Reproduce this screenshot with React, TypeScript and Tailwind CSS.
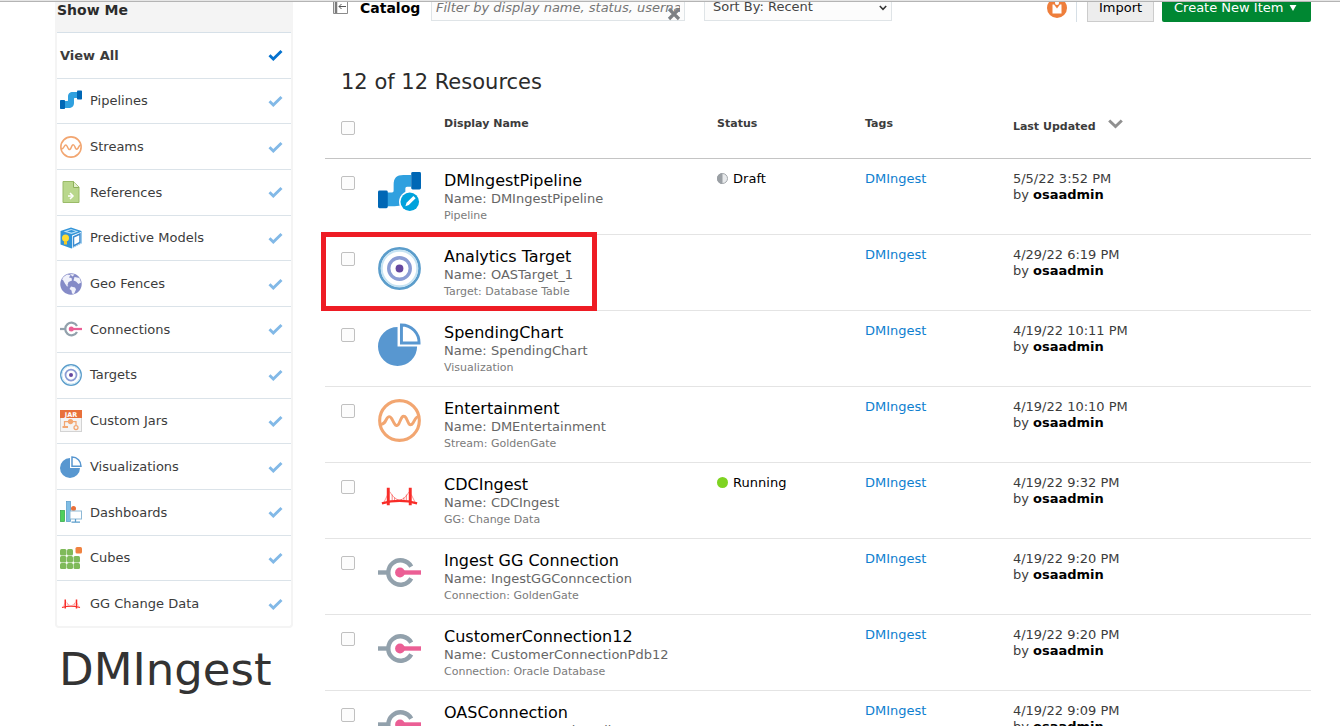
import React from "react";

type IconName =
  | "pipeline" | "pipelineEdit" | "stream" | "reference" | "model" | "geo" | "connection"
  | "target" | "jar" | "chart" | "dashboard" | "cube" | "bridge";

function Icon({ name, className }: { name: IconName; className: string }) {
  return (
    <svg viewBox="0 0 44 44" className={className} aria-hidden="true">
      {shapes[name]}
    </svg>
  );
}

const pipe = (
  <>
    <path d="M9 22h5c2 0 2-1 2-3v-5C16 7 19 4 26 4h8v12h-4c-2 0-2 1-2 3v6c0 8-4 11-11 11H9z" fill="#2fa0df" />
    <rect x="0" y="20" width="10" height="18" rx="1.5" fill="#0067b5" />
    <rect x="34" y="1" width="10" height="18" rx="1.5" fill="#0067b5" />
  </>
);

const shapes: Record<IconName, React.ReactNode> = {
  pipeline: pipe,
  pipelineEdit: (
    <>
      {pipe}
      <circle cx="32.500" cy="31.500" r="11" fill="#fff" />
      <circle cx="32.500" cy="31.500" r="9.500" fill="#00a2dc" />
      <path d="M28 36l1.200-3.500 7-7 2.300 2.300-7 7z" fill="#fff" />
    </>
  ),
  stream: (
    <g fill="none" stroke="#f2a671">
      <circle cx="22" cy="22" r="20.300" strokeWidth="3.200" />
      <path d="M3 26c3 0 4-2 5.500-5 2-4 4-4 6 0s4 9 7 4c2-4 3-9 6-7s3 10 7 8c3-2 3-8 7-8" strokeWidth="3" />
    </g>
  ),
  reference: (
    <g>
      <path d="M6 1h21l11 11v31H6z" fill="#b9d78c" stroke="#9abb68" strokeWidth="2" />
      <path d="M27 1v12h11" fill="#e4efcf" stroke="#8db05a" strokeWidth="2" />
      <path d="M16 30h7M20 24l6 6-6 6" fill="none" stroke="#fff" strokeWidth="3" />
    </g>
  ),
  model: (
    <g>
      <path d="M1 8L22 1l21 7v25l-20 10L1 35z" fill="#3294d8" />
      <path d="M7 9l15-5 15 5-14 5z" fill="#b8def5" />
      <path d="M14 9l9-3 8 3-8 2z" fill="#3294d8" />
      <path d="M24 17l18-7v23l-18 9z" fill="#fff" />
      <path d="M27 20l13-6v17l-13 7z" fill="#fff" stroke="#3a8bd0" strokeWidth="3" />
      <circle cx="11" cy="22" r="7" fill="#ffdc32" />
      <path d="M8 28h6v7H8z" fill="#f5c927" />
    </g>
  ),
  geo: (
    <g>
      <circle cx="22" cy="22" r="21.500" fill="#858bc7" />
      <path d="M7 8l7-5 7 1-3 5 5 1 1 5-7 3-2 6-4-1-5-9-2-1zM20 2l9 1-4 4zM29 8l10 2 3 9-5 3-5-5-5-2zM22 27l8 2 2 4-4 9-4-1-1-6-4-3zM10 21l7 5-3 1z" fill="#f1f2fb" />
    </g>
  ),
  connection: (
    <g fill="none">
      <path d="M0 22h11" stroke="#92a1ac" strokeWidth="4.500" />
      <path d="M34 16A12.500 12.500 0 1 0 34 28" stroke="#92a1ac" strokeWidth="4.500" />
      <path d="M22 22h22" stroke="#eb5f95" strokeWidth="4.500" />
      <circle cx="22.500" cy="22" r="5" fill="#eb5f95" />
    </g>
  ),
  target: (
    <g fill="none">
      <circle cx="22" cy="22" r="20.500" stroke="#5b9dcb" strokeWidth="2.800" />
      <circle cx="22" cy="22" r="18.200" stroke="#c6e3f3" strokeWidth="2" />
      <circle cx="22" cy="22" r="11" stroke="#8a9cd4" strokeWidth="3.500" />
      <circle cx="22" cy="22" r="4" fill="#6648a0" />
    </g>
  ),
  jar: (
    <g>
      <rect x="1" y="1" width="42" height="42" fill="#f4f4f4" stroke="#d3d3d3" strokeWidth="2" />
      <rect width="44" height="16" fill="#e8703a" />
      <text x="22" y="13" textAnchor="middle" fontSize="13" fontWeight="bold" fontFamily="DejaVu Sans" fill="#fff">JAR</text>
      <g fill="none" stroke="#f2a671" strokeWidth="2.500">
        <path d="M9 32v-9h23v7" />
        <circle cx="21" cy="23" r="4" fill="#f2a671" />
        <circle cx="32" cy="35" r="4" />
        <path d="M5 34h11" strokeWidth="4" />
      </g>
    </g>
  ),
  chart: (
    <g>
      <path d="M20 4v20h20a20 20 0 1 1-20-20z" fill="#5897d0" />
      <path d="M24 2a18 18 0 0 1 18 18.500H24z" fill="#fff" stroke="#5897d0" strokeWidth="3" />
    </g>
  ),
  dashboard: (
    <g>
      <rect x="1" y="19" width="8" height="22" fill="#4fd05c" stroke="#35a849" strokeWidth="1.500" />
      <rect x="13" y="1" width="8" height="40" fill="#7fbde5" stroke="#5b9dcb" strokeWidth="1.500" />
      <circle cx="27" cy="15" r="5" fill="#e8703a" />
      <rect x="20" y="20" width="23" height="16" fill="#fff" stroke="#8fb9d6" strokeWidth="2" />
      <path d="M31 36v5M23 42h17" stroke="#5b9dcb" strokeWidth="2.500" />
    </g>
  ),
  cube: (
    <g fill="#7fba5a">
      <rect x="0" y="4" width="13" height="13" rx="3" />
      <rect x="14" y="4" width="12" height="13" rx="3" />
      <rect x="0" y="18" width="13" height="13" rx="3" />
      <rect x="14" y="18" width="12" height="13" rx="3" />
      <rect x="27" y="18" width="13" height="13" rx="3" />
      <rect x="0" y="32" width="13" height="12" rx="3" />
      <rect x="14" y="32" width="12" height="12" rx="3" />
      <rect x="27" y="32" width="13" height="12" rx="3" />
      <rect x="31" y="0" width="13" height="13" rx="3" fill="#f08240" />
    </g>
  ),
  bridge: (
    <g fill="none" stroke="#f82c28">
      <path d="M10.500 13v18M33 13v18" strokeWidth="3" />
      <path d="M4 29q18-5 36 0" strokeWidth="2.300" />
      <path d="M12 17q10 17 20 0M10 20l-4 8M34 20l4 8" strokeWidth="1" opacity=".5" />
      <path d="M14.500 20v6M17 23v3M19.500 25v2M24 25v2M26.500 23v3M29 20v6" strokeWidth="1" opacity=".6" />
    </g>
  ),
};

function Check({ className }: { className: string }) {
  return (
    <svg viewBox="0 0 15 12" className={className} aria-hidden="true">
      <path d="M1.500 6.300L5.300 10 13.500 2" fill="none" stroke="currentColor" strokeWidth="2.900" />
    </svg>
  );
}

const filters: { label: string; icon: IconName }[] = [
  { label: "Pipelines", icon: "pipeline" },
  { label: "Streams", icon: "stream" },
  { label: "References", icon: "reference" },
  { label: "Predictive Models", icon: "model" },
  { label: "Geo Fences", icon: "geo" },
  { label: "Connections", icon: "connection" },
  { label: "Targets", icon: "target" },
  { label: "Custom Jars", icon: "jar" },
  { label: "Visualizations", icon: "chart" },
  { label: "Dashboards", icon: "dashboard" },
  { label: "Cubes", icon: "cube" },
  { label: "GG Change Data", icon: "bridge" },
];

type Resource = {
  title: string;
  name: string;
  kind: string;
  icon: IconName;
  date: string;
  status?: "Draft" | "Running";
  marked?: boolean;
};

const resources: Resource[] = [
  { title: "DMIngestPipeline", name: "DMIngestPipeline", kind: "Pipeline", icon: "pipelineEdit", date: "5/5/22 3:52 PM", status: "Draft" },
  { title: "Analytics Target", name: "OASTarget_1", kind: "Target: Database Table", icon: "target", date: "4/29/22 6:19 PM", marked: true },
  { title: "SpendingChart", name: "SpendingChart", kind: "Visualization", icon: "chart", date: "4/19/22 10:11 PM" },
  { title: "Entertainment", name: "DMEntertainment", kind: "Stream: GoldenGate", icon: "stream", date: "4/19/22 10:10 PM" },
  { title: "CDCIngest", name: "CDCIngest", kind: "GG: Change Data", icon: "bridge", date: "4/19/22 9:32 PM", status: "Running" },
  { title: "Ingest GG Connection", name: "IngestGGConncection", kind: "Connection: GoldenGate", icon: "connection", date: "4/19/22 9:20 PM" },
  { title: "CustomerConnection12", name: "CustomerConnectionPdb12", kind: "Connection: Oracle Database", icon: "connection", date: "4/19/22 9:20 PM" },
  { title: "OASConnection", name: "OASConnectionPdb12", kind: "Connection: Oracle Database", icon: "connection", date: "4/19/22 9:09 PM" },
];

function Tick({ label }: { label: string }) {
  return (
    <input type="checkbox" aria-label={label} className="block size-[14px] appearance-none rounded-xs border border-[#c0c0c0] bg-[#fcfcfc] checked:bg-[#0572ce]" />
  );
}

function StatusMark({ status }: { status: "Draft" | "Running" }) {
  return (
    <span className="flex items-center gap-[5px] text-black">
      <svg viewBox="0 0 11 11" className="size-[11px]" aria-hidden="true">
        {status === "Draft" ? (
          <>
            <circle cx="5.500" cy="5.500" r="5" fill="#e8eaec" stroke="#a4a8ac" />
            <path d="M5.500 0a5.500 5.500 0 0 0 0 11z" fill="#9a9fa4" />
          </>
        ) : (
          <circle cx="5.500" cy="5.500" r="5.500" fill="#7ed321" />
        )}
      </svg>
      {status}
    </span>
  );
}

function Sidebar() {
  return (
    <aside className="w-[325px] shrink-0 pl-[55px]">
      <div className="mr-8 rounded-b-sm border-2 border-t-0 border-[#f4f4f4]">
        <h2 className="h-[30px] bg-[#f4f4f4] pt-px text-[14px] leading-[14px] font-bold text-[#2b2b2b]">Show Me</h2>
        <ul className="grid h-[594px] auto-rows-fr">
          <li className="border-t border-[#d6e0e8]">
            <button type="button" className="flex size-full items-center justify-between pr-2 pl-[3px] text-[13px] font-bold">
              View All
              <Check className="h-3 w-[15px] text-[#0572ce]" />
            </button>
          </li>
          {filters.map((f) => (
            <li key={f.label} className="border-t border-[#dbe3e9]">
              <button type="button" className="flex size-full items-center gap-2 pr-2 pl-[3px] text-[13px]">
                <Icon name={f.icon} className="size-[22px]" />
                <span className="grow text-left">{f.label}</span>
                <Check className="h-3 w-[15px] text-[#82b9e7]" />
              </button>
            </li>
          ))}
        </ul>
      </div>
      <h1 className="pt-4 pl-1 text-[45px] leading-[52px] text-[#333]">DMIngest</h1>
    </aside>
  );
}

function Toolbar() {
  return (
    <header className="flex h-5 items-end overflow-hidden text-[13px]">
      <button type="button" aria-label="Collapse panel" className="mb-2 ml-2">
        <svg viewBox="0 0 15 15" className="size-[15px]" fill="none" stroke="#8b8b8b" aria-hidden="true">
          <path d="M.5.500h14v14H.500z" />
          <path d="M3 1v13" stroke="#7b7b7b" strokeWidth="2.500" />
          <path d="M6 7.500h7M8.500 5L6 7.500 8.500 10" stroke="#555" />
        </svg>
      </button>
      <h2 className="ml-3 w-[71px] text-[14px] leading-[28px] font-bold text-black">Catalog</h2>
      <div className="relative mb-px flex w-[254px]">
        <input
          type="text"
          aria-label="Filter"
          placeholder="Filter by display name, status, username"
          className="h-7 w-full border border-[#dfe4e7] bg-[#fcfcfc] px-1 text-[13px] italic placeholder:text-[#757575]"
        />
        <button type="button" aria-label="Clear filter" className="absolute right-1 bottom-0">
          <svg viewBox="0 0 14 14" className="size-[14px]" aria-hidden="true">
            <path d="M2 2l10 10M12 2L2 12" stroke="#7d8084" strokeWidth="3.200" />
          </svg>
        </button>
      </div>
      <div className="relative mb-px ml-[19px] flex w-[188px]">
        <select aria-label="Sort order" className="h-7 w-full appearance-none border border-[#dfe4e7] bg-[#fcfcfc] px-2 text-[13px] text-[#444]">
          <option>Sort By: Recent</option>
        </select>
        <svg viewBox="0 0 8 6" className="pointer-events-none absolute right-[5px] bottom-[10px] h-[6px] w-2" aria-hidden="true">
          <path d="M.8 1L4 4.300 7.200 1" fill="none" stroke="#333" strokeWidth="1.500" />
        </svg>
      </div>
      <div className="ml-auto flex items-end">
        <button type="button" aria-label="User" className="mb-1 mr-[9px]">
          <svg viewBox="0 0 20 20" className="size-5" aria-hidden="true">
            <circle cx="10" cy="10" r="10" fill="#ee7e3b" />
            <path d="M5.500 6.500h1.500l3 4 3-4h1.500v9h-9z" fill="#fff" />
            <circle cx="10" cy="5" r="2" fill="#fff" />
          </svg>
        </button>
        <div className="mr-[10px] h-7 border-l border-[#d6dfe6]" />
        <button type="button" className="h-7 w-[67px] border border-[#ccc] bg-[#ededed] text-black">Import</button>
        <button type="button" className="ml-2 flex h-7 w-[149px] items-center gap-[6px] rounded-b-xs bg-[#008732] pl-3 text-white">
          Create New Item
          <svg viewBox="0 0 8 7" className="h-[6px] w-2 shrink-0" aria-hidden="true"><path d="M0 0h8L4 7z" fill="#fff" /></svg>
        </button>
      </div>
    </header>
  );
}

function Catalog() {
  return (
    <main className="min-w-0 grow pr-[29px]">
      <Toolbar />
      <h2 className="pt-[46px] pl-4 text-[21px] leading-[28px] text-[#2b2b2b]">12 of 12 Resources</h2>
      <table className="w-full table-fixed border-collapse text-left text-[13px] leading-4">
        <thead>
          <tr className="h-[62px] border-b border-[#c4c4c4] align-top text-[11px]">
            <th className="w-[53px] pt-[25px] pl-4"><Tick label="Select all" /></th>
            <th className="w-[66px]" aria-label="Type" />
            <th className="w-[27.7%] pt-5">Display Name</th>
            <th className="w-[15%] pt-5">Status</th>
            <th className="w-[15%] pt-5">Tags</th>
            <th className="pt-5">
              <button type="button" className="flex items-start gap-3">
                <span className="pt-[3px]">Last Updated</span>
                <svg viewBox="0 0 15 10" className="mt-[3px] h-[10px] w-[15px]" aria-hidden="true">
                  <path d="M1.200 1.500l6.300 6 6.300-6" fill="none" stroke="#909090" strokeWidth="3" />
                </svg>
              </button>
            </th>
          </tr>
        </thead>
        <tbody>
          {resources.map((r) => (
            <tr key={r.title} className="h-[76px] border-b border-[#e4e4e4] align-top">
              <td className="relative pt-[17px] pl-4">
                <Tick label={r.title} />
                {r.marked && (
                  <div className="pointer-events-none absolute -top-[3px] -left-1 h-[79px] w-[276px] border-[5px] border-[#ee1c24]" />
                )}
              </td>
              <td className="pt-3"><Icon name={r.icon} className="size-[43px]" /></td>
              <td className="pt-[13px] leading-[18px]">
                <div className="text-[16px] text-black">{r.title}</div>
                <div className="text-[#666]">Name: {r.name}</div>
                <div className="text-[11px] leading-4 text-[#7b7b7b]">{r.kind}</div>
              </td>
              <td className="pt-3">{r.status && <StatusMark status={r.status} />}</td>
              <td className="pt-3"><a href="#tag" className="text-[#0e80cf]">DMIngest</a></td>
              <td className="pt-3">
                <div>{r.date}</div>
                <div>by <b className="text-black">osaadmin</b></div>
              </td>
            </tr>
          ))}
        </tbody>
      </table>
    </main>
  );
}

export default function App() {
  return (
    <div className="flex h-screen flex-col overflow-hidden bg-white font-['DejaVu_Sans',sans-serif] text-[#3c3c3c]">
      <div className="h-[2px] shrink-0 border-b border-[#b4b4b4] bg-[#e6e6e6]" />
      <div className="flex">
        <Sidebar />
        <Catalog />
      </div>
    </div>
  );
}
